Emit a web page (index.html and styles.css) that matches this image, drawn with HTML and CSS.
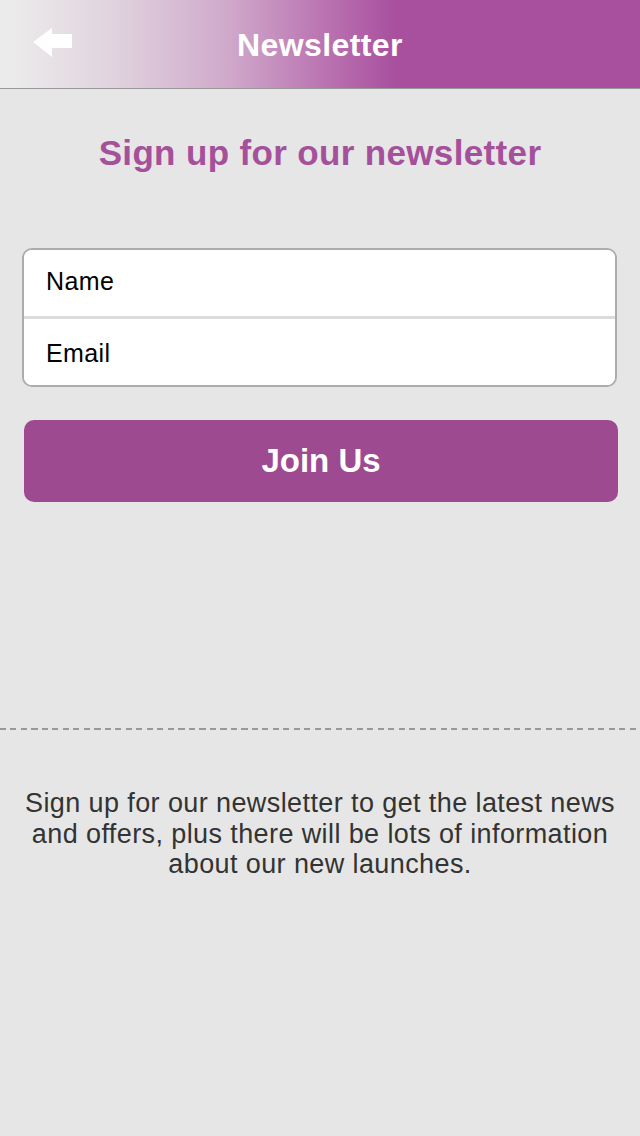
FILE: index.html
```html
<!DOCTYPE html>
<html lang="en">
<head>
    <meta charset="UTF-8">
    <meta name="viewport" content="width=device-width, initial-scale=1.0">
    <title>Newsletter</title>
    <link rel="stylesheet" href="styles.css">
</head>
<body>
    <header class="top-bar">
        <a class="back-btn" href="#" aria-label="Back">
            <svg width="40" height="30" viewBox="0 0 40 30">
                <polygon points="0,14 19,0 19,6 39,6 39,20 19,20 19,29" fill="#fff"/>
            </svg>
        </a>
        <h1 class="top-title">Newsletter</h1>
        <span></span>
    </header>
    <main>
        <h2 class="signup-heading">Sign up for our newsletter</h2>

        <form class="signup-form" id="signup-form">
            <div class="field-group">
                <input class="field" type="text" name="name" placeholder="Name">
                <input class="field" type="email" name="email" placeholder="Email">
            </div>
            <button class="join-btn" type="submit">Join Us</button>
        </form>

        <hr class="dashed">

        <p class="info-text">Sign up for our newsletter to get the latest news and offers, plus there will be lots of information about our new launches.</p>
    </main>
</body>
</html>
```

FILE: styles.css
```css
body {
    font-family: "Liberation Sans", Arial, Helvetica, sans-serif;
    margin: 0;
    padding: 0;
    background-color: #e6e6e6;
}

.top-bar {
    height: 88px;
    display: grid;
    grid-template-columns: 1fr auto 1fr;
    align-items: center;
    background: linear-gradient(to right, #ebebeb 2%, #e0d2de 18%, #cfa8ca 36%, #bb76b2 50%, #a84f9e 62%);
    border-bottom: 1px solid #9a9a9a;
}

.back-btn {
    display: flex;
    padding-left: 33px;
    padding-bottom: 3px;
}

.top-title {
    margin: 0;
    padding-top: 2px;
    font-size: 32px;
    letter-spacing: 0.4px;
    color: #fff;
    line-height: 36px;
}

.signup-heading {
    margin: 44px 0 0;
    text-align: center;
    font-size: 35px;
    letter-spacing: 0.35px;
    line-height: 40px;
    color: #a5509a;
}

.signup-form {
    margin-top: 75px;
}

.field-group {
    margin-left: 22px;
    width: 591px;
    border: 2px solid #acacac;
    border-radius: 10px;
    background-color: #fff;
    overflow: hidden;
}

.field {
    display: block;
    box-sizing: border-box;
    width: 100%;
    height: 66px;
    padding: 0 0 3px 22px;
    border: none;
    font-family: inherit;
    font-size: 25px;
    letter-spacing: 0.4px;
    color: #000;
    background: #fff;
    outline: none;
}

.field::placeholder {
    color: #000;
}

.field + .field {
    border-top: 3px solid #dcdcdc;
    height: 69px;
    padding-top: 3px;
    padding-bottom: 0;
}

.join-btn {
    display: block;
    margin: 33px 0 0 24px;
    width: 594px;
    height: 82px;
    border: none;
    border-radius: 10px;
    background-color: #9d4a91;
    color: #fff;
    font-family: inherit;
    font-size: 33px;
    font-weight: bold;
    cursor: pointer;
}

.dashed {
    margin: 226px 0 0;
    height: 2px;
    border: none;
    background: repeating-linear-gradient(to right, #999 0 6px, transparent 6px 10.5px);
}

.info-text {
    margin: 58px 0 0;
    padding: 0 20px;
    text-align: center;
    font-size: 27px;
    letter-spacing: 0.4px;
    line-height: 30.5px;
    color: #333;
}
```
